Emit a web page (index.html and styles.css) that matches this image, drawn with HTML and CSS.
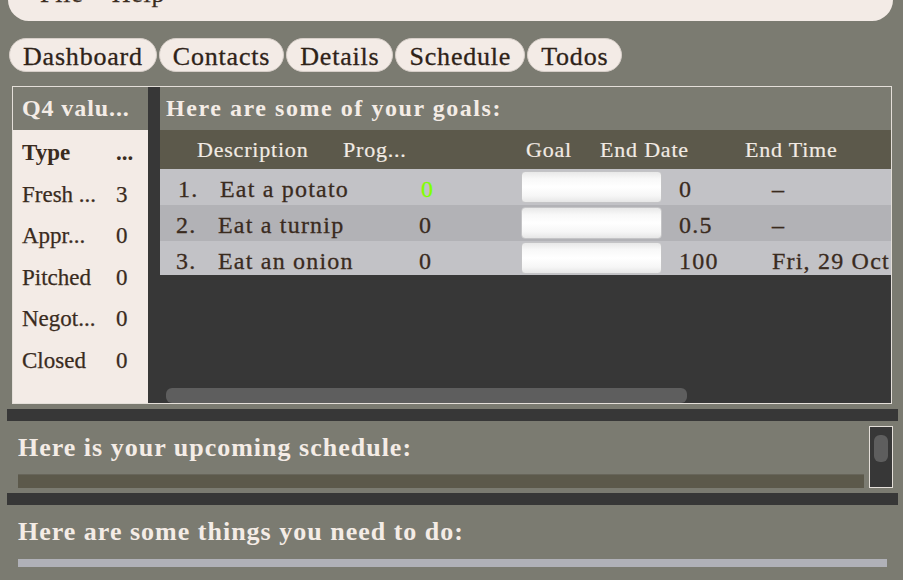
FILE: index.html
```html
<!DOCTYPE html>
<html lang="en">
<head>
<meta charset="utf-8">
<title>Dashboard</title>
<link rel="stylesheet" href="styles.css">
</head>
<body>
<header class="menubar">
  <span class="menu-item">File</span>
  <span class="menu-item">Help</span>
</header>

<nav class="tabs">
  <div class="tab">Dashboard</div>
  <div class="tab">Contacts</div>
  <div class="tab">Details</div>
  <div class="tab">Schedule</div>
  <div class="tab">Todos</div>
</nav>

<main class="goals-box">
  <aside class="q4">
    <div class="panel-title">Q4 valu...</div>
    <div class="q4-body">
      <div class="q4-row q4-head"><span class="q4-name">Type</span><span>...</span></div>
      <div class="q4-row"><span class="q4-name">Fresh ...</span><span>3</span></div>
      <div class="q4-row"><span class="q4-name">Appr...</span><span>0</span></div>
      <div class="q4-row"><span class="q4-name">Pitched</span><span>0</span></div>
      <div class="q4-row"><span class="q4-name">Negot...</span><span>0</span></div>
      <div class="q4-row"><span class="q4-name">Closed</span><span>0</span></div>
    </div>
  </aside>

  <section class="goals">
    <div class="panel-title goals-title">Here are some of your goals:</div>
    <div class="thead">
      <span class="th th-desc">Description</span>
      <span class="th th-prog">Prog...</span>
      <span class="th th-goal">Goal</span>
      <span class="th th-date">End Date</span>
      <span class="th th-time">End Time</span>
    </div>
    <div class="trow row-light row-first">
      <span class="td td-num">1.</span>
      <span class="td td-desc">Eat a potato</span>
      <span class="td td-prog done">0</span>
      <span class="td-goal"><span class="goal-input"></span></span>
      <span class="td td-date">0</span>
      <span class="td td-time">–</span>
    </div>
    <div class="trow row-dark">
      <span class="td td-num">2.</span>
      <span class="td td-desc">Eat a turnip</span>
      <span class="td td-prog">0</span>
      <span class="td-goal"><span class="goal-input"></span></span>
      <span class="td td-date">0.5</span>
      <span class="td td-time">–</span>
    </div>
    <div class="trow row-light row-last">
      <span class="td td-num">3.</span>
      <span class="td td-desc">Eat an onion</span>
      <span class="td td-prog">0</span>
      <span class="td-goal"><span class="goal-input"></span></span>
      <span class="td td-date">100</span>
      <span class="td td-time">Fri, 29 Oct</span>
    </div>
    <div class="goals-fill"></div>
    <div class="hscroll-thumb"></div>
  </section>
</main>

<div class="splitter splitter-top"></div>

<section class="strip schedule">
  <div class="strip-main">
    <h2 class="strip-title">Here is your upcoming schedule:</h2>
    <div class="schedule-bar"></div>
  </div>
  <div class="vscroll"><div class="vscroll-thumb"></div></div>
</section>

<div class="splitter"></div>

<section class="strip todos">
  <div class="strip-main">
    <h2 class="strip-title">Here are some things you need to do:</h2>
    <div class="todo-bar"></div>
  </div>
</section>
</body>
</html>
```

FILE: styles.css
```css
* { box-sizing: border-box; }

html, body {
  margin: 0;
  padding: 0;
}

body {
  width: 903px;
  height: 580px;
  overflow: hidden;
  background: #7b7b71;
  font-family: "Liberation Serif", "Times New Roman", serif;
  color: #3a2b1e;
}

/* ---------- menu bar ---------- */
.menubar {
  margin: -19px 10px 0 8px;
  height: 40px;
  background: #f3ebe6;
  border-radius: 0 0 21px 21px;
  display: flex;
  gap: 28px;
  padding: 0 0 0 32px;
  font-size: 26px;
  line-height: 26px;
  letter-spacing: 0.8px;
  -webkit-text-stroke: 0.25px currentColor;
}

/* ---------- tabs ---------- */
.tabs {
  display: flex;
  gap: 2px;
  margin: 17px 0 0 9px;
}

.tab {
  height: 34px;
  padding: 3px 13px 0;
  border: 1px solid #d6cec8;
  border-radius: 17px;
  background: #f3ebe6;
  font-size: 26px;
  line-height: 29px;
  letter-spacing: 0.8px;
  color: #2e2218;
  -webkit-text-stroke: 0.3px currentColor;
}

/* ---------- goals box ---------- */
.goals-box {
  display: flex;
  margin: 14px 11px 0 12px;
  height: 318px;
  border: 1px solid #e4dfd9;
}

.panel-title {
  height: 43px;
  background: #7b7b71;
  color: #f4ece6;
  font-size: 24px;
  font-weight: bold;
  line-height: 43px;
  letter-spacing: 1.2px;
  white-space: nowrap;
  overflow: hidden;
}

.q4 {
  width: 135px;
  display: flex;
  flex-direction: column;
}

.q4 .panel-title {
  padding-left: 9px;
  letter-spacing: 0.9px;
}

.q4-body {
  flex: 1;
  background: #f3ebe6;
  padding: 2px 0 0 9px;
  -webkit-text-stroke: 0.25px currentColor;
}

.q4-row {
  display: grid;
  grid-template-columns: 94px 1fr;
  height: 41.6px;
  font-size: 23px;
  line-height: 41.6px;
  white-space: nowrap;
}

.q4-head { font-weight: bold; -webkit-text-stroke: 0; }

.goals {
  flex: 1;
  background: #373737;
  padding-left: 12px;
  display: flex;
  flex-direction: column;
  min-width: 0;
}

.goals-title {
  padding-left: 6px;
  letter-spacing: 1.55px;
}

.thead {
  height: 39px;
  background: #5c594b;
  color: #f2ebe4;
  display: grid;
  grid-template-columns: 146px 183px 74px 145px 1fr;
  padding: 1px 0 0 37px;
  font-size: 22px;
  line-height: 38px;
  letter-spacing: 0.8px;
  white-space: nowrap;
  -webkit-text-stroke: 0.2px currentColor;
}

.trow {
  height: 36px;
  display: grid;
  grid-template-columns: 42px 201px 102px 158px 93px 1fr;
  align-items: start;
  padding-left: 16px;
  font-size: 24px;
  letter-spacing: 1.2px;
  white-space: nowrap;
  overflow: hidden;
  -webkit-text-stroke: 0.3px currentColor;
}

.row-light { background: #c2c2c6; }
.row-dark { background: #b2b2b6; }
.row-last { height: 34px; }

.td {
  padding-top: 6px;
  line-height: 28px;
}

.row-first .td-num,
.row-first .td-desc,
.row-first .td-prog { padding-left: 2px; }

.done { color: #80ff00; }

.td-goal { padding-top: 2px; }

.goal-input {
  display: block;
  width: 141px;
  height: 32px;
  border: 1px solid #c4c4c6;
  border-radius: 4px;
  background: linear-gradient(#e8e8e8 0%, #f8f8f8 22%, #ffffff 50%, #f6f6f6 80%, #e6e6e6 100%);
}

.row-last .td-goal { padding-top: 1px; }

.goals-fill { flex: 1; }

.hscroll-thumb {
  margin-left: 6px;
  width: 521px;
  height: 15px;
  border-radius: 6px;
  background: #5e5e5e;
}

/* ---------- splitters & strips ---------- */
.splitter {
  margin: 0 5px 0 7px;
  height: 12px;
  background: #373737;
}

.splitter-top { margin-top: 5px; }

.strip {
  display: flex;
  gap: 5px;
  padding: 0 10px 0 18px;
}

.schedule { height: 72px; }
.todos { height: 75px; padding-right: 16px; }

.strip-main { flex: 1; }

.strip-title {
  margin: 12px 0 0;
  font-size: 26px;
  font-weight: bold;
  line-height: 30px;
  letter-spacing: 1px;
  color: #f4ece6;
  white-space: nowrap;
}

.schedule-bar {
  margin-top: 11px;
  height: 14px;
  background: #5c594b;
  border-top: 1px solid #67655a;
}

.todo-bar {
  margin-top: 12px;
  height: 8px;
  background: #b0b1b8;
}

.vscroll {
  width: 24px;
  height: 62px;
  margin-top: 5px;
  border: 1px solid #e4dfd9;
  background: #373737;
  padding: 8px 0 0 4px;
}

.vscroll-thumb {
  width: 14px;
  height: 27px;
  border-radius: 6px;
  background: #5e5e5e;
}
```
